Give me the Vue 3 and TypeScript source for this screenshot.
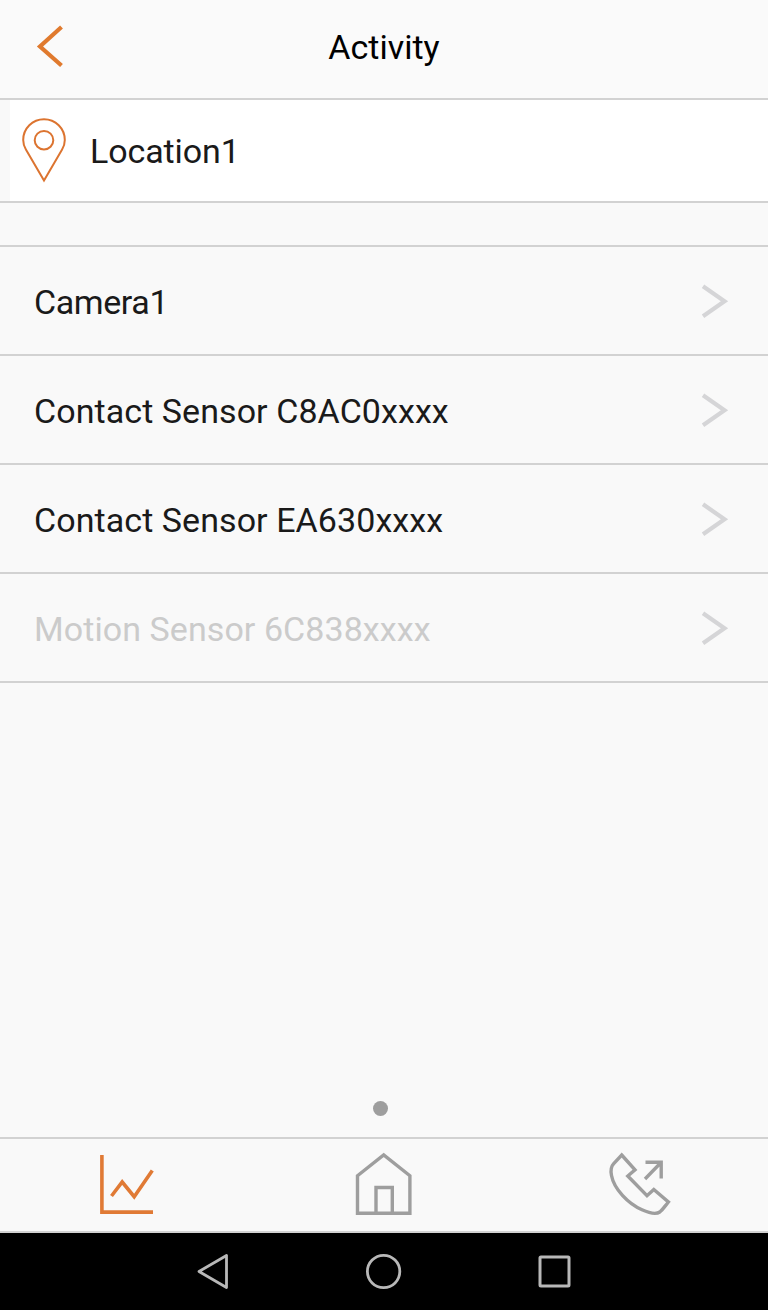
<script setup lang="ts">
interface Device {
  name: string
  disabled?: boolean
}

const devices: Device[] = [
  { name: 'Camera1' },
  { name: 'Contact Sensor C8AC0xxxx' },
  { name: 'Contact Sensor EA630xxxx' },
  { name: 'Motion Sensor 6C838xxxx', disabled: true },
]
</script>

<template>
  <div class="screen">
    <header class="header">
      <button class="back" aria-label="Back">
        <svg width="30" height="44" viewBox="0 0 30 44" fill="none">
          <path d="M26.500 3 5 22.500 26.500 41.500" stroke="#e07a2e" stroke-width="4.200" />
        </svg>
      </button>
      <h1 class="title">Activity</h1>
    </header>

    <section class="location">
      <svg class="pin" width="46" height="66" viewBox="0 0 46 66" fill="none" stroke="#dc7430" stroke-width="2">
        <path d="M23 63.500 4.900 32.500C2.800 29 2.200 26.300 2.200 23A20.800 20.800 0 0 1 43.800 23C43.800 26.300 43.200 29 41.100 32.500Z" />
        <circle cx="23" cy="23.200" r="9.300" />
      </svg>
      <span class="location-name">Location1</span>
    </section>

    <ul class="devices">
      <li v-for="device in devices" :key="device.name" class="device" :class="{ disabled: device.disabled }">
        <span class="device-name">{{ device.name }}</span>
        <svg width="30" height="36" viewBox="0 0 30 36" fill="none">
          <path d="M3 3.300 24.500 18.300 3 33.300" stroke="#d5d5d7" stroke-width="4.200" />
        </svg>
      </li>
    </ul>

    <div class="pager"><span class="dot"></span></div>

    <nav class="tabs">
      <svg width="64" height="68" viewBox="96 1150 64 68" fill="none" stroke="#e07a35" stroke-width="3.600">
        <path d="M101.900 1155V1212.100H153" />
        <path d="M111.500 1196 122.200 1182 134.200 1196.700 152.300 1170.500" />
      </svg>
      <svg width="64" height="68" viewBox="352 1150 64 68" fill="none" stroke="#9e9e9e" stroke-width="3.400">
        <path d="M357.500 1213.300V1175.700L383.700 1155 409.900 1175.700V1213.300Z" />
        <path d="M376 1213V1187.500H392.300V1213" />
      </svg>
      <svg width="68" height="68" viewBox="606 1150 68 68" fill="none" stroke="#9e9e9e" stroke-width="3.400">
        <path d="M621.700 1155 635 1169.800 627.800 1176 647 1195.700 653.800 1189.500 668.400 1202 C665 1206 663 1209.500 659.800 1212 C656 1214.500 648 1212.500 642 1209.800 C628 1203.500 614 1189 611.500 1175.500 C610.300 1169.500 611 1166.500 613.500 1163.800Z" />
        <path d="M645 1179 661 1162.500M645.500 1162.200H661.200V1178.500" />
      </svg>
    </nav>

    <footer class="system">
      <svg width="38" height="40" viewBox="194 1252 38 40" fill="none">
        <path d="M199 1271.500 226.500 1255.500V1287.500Z" stroke="#b8b8b8" stroke-width="2.800" stroke-linejoin="round" />
      </svg>
      <svg width="40" height="40" viewBox="0 0 40 40" fill="none">
        <circle cx="20.600" cy="19.500" r="16.200" stroke="#b8b8b8" stroke-width="2.800" />
      </svg>
      <svg width="40" height="40" viewBox="0 0 40 40" fill="none">
        <rect x="6" y="5" width="29" height="29" rx="1" stroke="#b8b8b8" stroke-width="3" />
      </svg>
    </footer>
  </div>
</template>

<style>
body {
  margin: 0;
}
</style>

<style scoped>
.screen {
  width: 768px;
  height: 1310px;
  display: flex;
  flex-direction: column;
  overflow: hidden;
  background: #f9f9f9;
  color: #1a1a1a;
  font-family: Roboto, "Liberation Sans", sans-serif;
  font-size: 34px;
  line-height: 40px;
}

svg {
  display: block;
  flex: none;
}

.header {
  box-sizing: border-box;
  height: 100px;
  border-bottom: 2px solid #d2d2d2;
  display: grid;
  grid-template-columns: 100px 1fr 100px;
  align-items: center;
  background: #fafafa;
}

.back {
  border: 0;
  padding: 0;
  background: none;
  margin: 0 0 6px 35px;
  width: 30px;
}

.title {
  margin: 0 0 4px;
  color: #000;
  font-size: 34px;
  font-weight: 400;
  text-align: center;
}

.location {
  box-sizing: border-box;
  height: 103px;
  border-bottom: 2px solid #d2d2d2;
  display: flex;
  align-items: center;
  background: linear-gradient(to right, #f9f9f9 10px, #fff 10px);
}

.pin {
  margin: 0 0 1px 21px;
}

.location-name {
  margin: 1px 0 0 23px;
  letter-spacing: -0.1px;
}

.devices {
  list-style: none;
  margin: 42px 0 0;
  padding: 0;
  border-top: 2px solid #d2d2d2;
}

.device {
  box-sizing: border-box;
  height: 109px;
  border-bottom: 2px solid #d2d2d2;
  padding: 0 38px 0 34px;
  display: flex;
  align-items: center;
  justify-content: space-between;
}

.device-name {
  margin-top: 2px;
  letter-spacing: 0.07px;
}

.device:first-child .device-name {
  letter-spacing: -0.4px;
}

.disabled {
  color: #cbcbcb;
}

.pager {
  margin-top: auto;
  height: 36px;
  padding-right: 7px;
  display: flex;
  justify-content: center;
}

.dot {
  width: 15px;
  height: 15px;
  border-radius: 50%;
  background: #9e9e9e;
}

.tabs {
  box-sizing: border-box;
  height: 96px;
  border-top: 2px solid #d2d2d2;
  border-bottom: 2px solid #d2d2d2;
  padding: 0 94px 2px 96px;
  display: grid;
  grid-template-columns: 65px 64px 68px;
  column-gap: 191px;
  align-items: center;
}

.tabs svg:last-child {
  margin-left: -1px;
}

.system {
  height: 77px;
  background: #000;
  display: flex;
  align-items: center;
  justify-content: space-between;
  padding: 0 194px;
}
</style>
